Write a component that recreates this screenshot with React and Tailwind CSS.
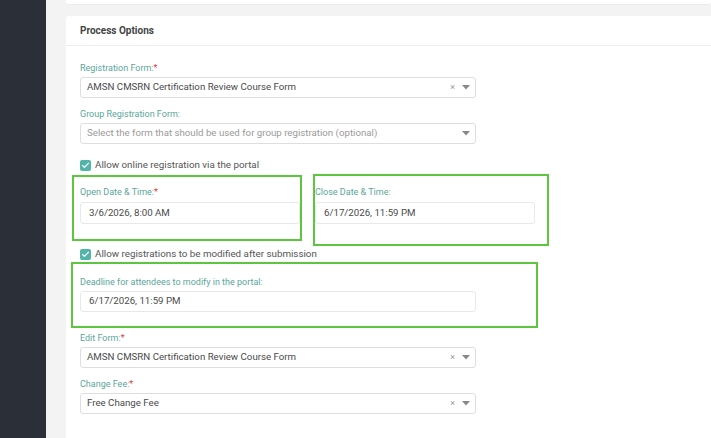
import { Check } from "lucide-react"

const font = { fontFamily: "Roboto, 'Open Sans', sans-serif" }

const Label = ({ children, required, mb = "mb-[3px]" }) => (
	<div className={"text-[9px] h-[12px] leading-[12px] text-[#5aa69b] " + mb}>
		{children}
		{required && <span className="text-[#e53935]">*</span>}
	</div>
)

const Select = ({ value, placeholder, clearable }) => (
	<div className="flex items-center h-[21px] w-[396px] border border-[#dedede] rounded-[3px] bg-white pl-[6px] pr-[5px]">
		<span className={"flex-1 truncate text-[9.7px] " + (value ? "text-[#4a4a4a]" : "text-[#9a9a9a]")}>
			{value || placeholder}
		</span>
		{clearable && <span className="text-[9px] text-[#999] mr-[7px]">×</span>}
		<svg width="8" height="5" viewBox="0 0 8 5">
			<path d="M0 0 L8 0 L4 4.5 Z" fill="#888" />
		</svg>
	</div>
)

const Input = ({ value, w = "w-[220px]", h = "h-[22px]" }) => (
	<div className={"flex items-center border border-[#e8e8e8] rounded-[3px] bg-white pl-[8px] text-[9.7px] text-[#4a4a4a] " + w + " " + h}>
		{value}
	</div>
)

const CheckRow = ({ children }) => (
	<div className="flex items-center gap-[4px] h-[14px]">
		<div className="w-[11px] h-[11px] rounded-[2px] bg-[#52b5aa] flex items-center justify-center">
			<Check size={9} color="white" strokeWidth={3} />
		</div>
		<span className="text-[9.8px] text-[#555]">{children}</span>
	</div>
)

const App = () => {
	return (
		<div className="flex w-[711px] h-[438px] overflow-hidden bg-[#f3f3f4]" style={font}>
			<div className="w-[46px] shrink-0 bg-[#2b2f37]" />
			<div className="flex-1 pl-[20px] flex flex-col">
				<div className="h-[5px] bg-white rounded-b-[3px] border-b border-[#ececec]" />
				<div className="mt-[11px] flex-1 bg-white rounded-tl-[3px]">
					<div className="h-[30px] border-b border-[#eeeeee] pl-[14px] flex items-center">
						<span className="text-[10px] font-bold text-[#444]">Process Options</span>
					</div>
					<div className="pl-[14px] pt-[16px] relative">
						<Label required>Registration Form:</Label>
						<Select value="AMSN CMSRN Certification Review Course Form" clearable />
						<div className="mt-[10px]">
							<Label>Group Registration Form:</Label>
							<Select placeholder="Select the form that should be used for group registration (optional)" />
						</div>
						<div className="mt-[14px]">
							<CheckRow>Allow online registration via the portal</CheckRow>
						</div>
						<div className="mt-[14px] flex gap-[15px]">
							<div>
								<Label required mb="mb-[4px]">Open Date &amp; Time:</Label>
								<Input value="3/6/2026, 8:00 AM" />
							</div>
							<div>
								<Label mb="mb-[4px]">Close Date &amp; Time:</Label>
								<Input value="6/17/2026, 11:59 PM" />
							</div>
						</div>
						<div className="mt-[23px]">
							<CheckRow>Allow registrations to be modified after submission</CheckRow>
						</div>
						<div className="mt-[15px]">
							<Label>Deadline for attendees to modify in the portal:</Label>
							<Input value="6/17/2026, 11:59 PM" w="w-[396px]" h="h-[21px]" />
						</div>
						<div className="mt-[20px]">
							<Label required>Edit Form:</Label>
							<Select value="AMSN CMSRN Certification Review Course Form" clearable />
						</div>
						<div className="mt-[10px]">
							<Label required>Change Fee:</Label>
							<Select value="Free Change Fee" clearable />
						</div>

						<div className="absolute left-[6px] top-[129px] w-[230px] h-[66px] border-2 border-[#5cc63f]" />
						<div className="absolute left-[247px] top-[128px] w-[236px] h-[72px] border-2 border-[#5cc63f]" />
						<div className="absolute left-[5px] top-[216px] w-[467px] h-[66px] border-2 border-[#5cc63f]" />
					</div>
				</div>
			</div>
		</div>
	)
}

export default App
